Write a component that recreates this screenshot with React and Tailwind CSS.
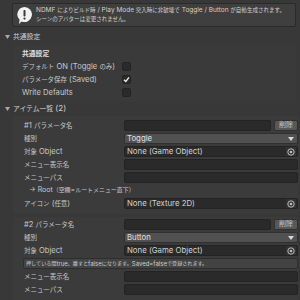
import React from 'react';

const font = { fontFamily: '"Inter", "Noto Sans CJK JP", sans-serif' };

function T({ children }) {
    const parts = String(children).split(/([\u3000-\u30ff\u4e00-\u9fff\uff00-\uffef]+)/);
    return (
        <>
            {parts.map((p, i) =>
                i % 2 === 1 ? <span key={i} className="text-[0.85em]">{p}</span> : <React.Fragment key={i}>{p}</React.Fragment>
            )}
        </>
    );
}

function Foldout({ title }) {
    return (
        <div className="flex items-center h-[13px] pl-[5px] text-[8px] text-[#d2d2d2] whitespace-nowrap">
            <svg width="5" height="4" viewBox="0 0 5 4" className="mr-[3px]">
                <path d="M0 0 L5 0 L2.5 4 Z" fill="#a8a8a8" />
            </svg>
            <span className="text-[8px]"><T>{title}</T></span>
        </div>
    );
}

function Row({ label, children }) {
    return (
        <div className="flex items-center h-[11px]">
            <div className="w-[100px] shrink-0 text-[7.6px] leading-[11px] text-[#c8c8c8] whitespace-nowrap"><T>{label}</T></div>
            <div className="flex-1 flex h-full gap-[3px]">{children}</div>
        </div>
    );
}

function TextField() {
    return <div className="flex-1 h-full bg-[#2a2a2a] border border-[#232323] rounded-[2px]" />;
}

function ObjectField({ text }) {
    return (
        <div className="flex-1 h-full bg-[#2a2a2a] border border-[#232323] rounded-[2px] flex items-center pl-[2px] text-[7.8px] text-[#d2d2d2] whitespace-nowrap">
            <span className="flex-1">{text}</span>
            <div className="w-[10px] h-full flex items-center justify-center bg-[#333333] mr-[1px]">
                <svg width="8" height="8" viewBox="0 0 8 8">
                    <circle cx="4" cy="4" r="3.2" fill="none" stroke="#bdbdbd" strokeWidth="1" />
                    <circle cx="4" cy="4" r="1.3" fill="#bdbdbd" />
                </svg>
            </div>
        </div>
    );
}

function Dropdown({ text }) {
    return (
        <div className="flex-1 h-full bg-[#515151] border border-[#303030] rounded-[2px] flex items-center pl-[2px] text-[7.8px] text-[#e0e0e0]">
            <span className="flex-1">{text}</span>
            <svg width="6" height="4" viewBox="0 0 6 4" className="mr-[3px]">
                <path d="M0 0 L6 0 L3 4 Z" fill="#d8d8d8" />
            </svg>
        </div>
    );
}

function DeleteButton() {
    return (
        <div className="w-[24px] h-full bg-[#585858] border border-[#303030] rounded-[2px] flex items-center justify-center text-[7px] text-[#c8c8c8]">削除</div>
    );
}

function CheckRow({ label, checked }) {
    return (
        <div className="flex items-center h-[13px]">
            <div className="w-[100px] shrink-0 text-[7.6px] text-[#c8c8c8] whitespace-nowrap"><T>{label}</T></div>
            <div className="w-[9px] h-[9px] bg-[#2a2a2a] border border-[#232323] rounded-[2px] flex items-center justify-center">
                {checked && (
                    <svg width="7" height="7" viewBox="0 0 7 7">
                        <path d="M1 3.8 L2.8 5.5 L6 1.3" fill="none" stroke="#f0f0f0" strokeWidth="1.3" />
                    </svg>
                )}
            </div>
        </div>
    );
}

export default function App() {
    return (
        <div className="w-[300px] h-[300px] overflow-hidden bg-[#383838] flex flex-col" style={font}>
            {/* help box */}
            <div className="mt-[3px] ml-[12px] mr-[4px] h-[24px] shrink-0 bg-[#3f3f3f] border border-[#2a2a2a] rounded-[2px] flex items-center">
                <svg width="17" height="19" viewBox="0 0 17 19" className="ml-[3px] mr-[3px] shrink-0">
                    <path d="M8.5 1 A7.5 7.5 0 1 1 5.5 15.4 L3 18 L3.6 13.8 A7.5 7.5 0 0 1 8.5 1 Z" fill="#f2f2f2" />
                    <rect x="7.5" y="4" width="2" height="6.5" rx="0.8" fill="#3a3a3a" />
                    <circle cx="8.5" cy="12.6" r="1.1" fill="#3a3a3a" />
                </svg>
                <div className="text-[6.5px] leading-[9px] text-[#d0d0d0] whitespace-nowrap">
                    <div><T>NDMF によりビルド時 / Play Mode 突入時に非破壊で Toggle / Button が自動生成されます。</T></div>
                    <div><T>シーンのアバターは変更されません。</T></div>
                </div>
            </div>

            <div className="h-[3px] shrink-0" />
            <Foldout title="共通設定" />

            {/* common settings box */}
            <div className="ml-[13px] mr-[4px] mt-[2px] pt-[3px] pb-[2px] pl-[9px] bg-[#3a3a3a] shrink-0">
                <div className="h-[12px] flex items-center text-[8px] font-bold text-[#e0e0e0]"><T>共通設定</T></div>
                <CheckRow label="デフォルト ON (Toggle のみ)" />
                <CheckRow label="パラメータ保存 (Saved)" checked />
                <CheckRow label="Write Defaults" />
            </div>

            <div className="h-[1px] shrink-0" />
            <Foldout title="アイテム一覧 (2)" />

            {/* item 1 */}
            <div className="ml-[13px] mr-[2px] mt-[1px] pt-[4px] pb-[5px] pl-[11px] bg-[#3b3b3b] flex flex-col gap-[2px] shrink-0">
                <Row label="#1  パラメータ名">
                    <TextField />
                    <DeleteButton />
                </Row>
                <Row label="種別"><Dropdown text="Toggle" /></Row>
                <Row label="対象 Object"><ObjectField text="None (Game Object)" /></Row>
                <Row label="メニュー表示名"><TextField /></Row>
                <Row label="メニューパス"><TextField /></Row>
                <div className="h-[11px] flex items-center pl-[5px] text-[7px] text-[#c8c8c8] whitespace-nowrap"><T>→ Root（空欄 = ルートメニュー直下）</T></div>
                <Row label="アイコン (任意)"><ObjectField text="None (Texture 2D)" /></Row>
            </div>

            {/* item 2 */}
            <div className="ml-[13px] mr-[2px] mt-[3px] pt-[2px] pl-[11px] bg-[#3b3b3b] flex flex-col gap-[2px] flex-1">
                <Row label="#2  パラメータ名">
                    <TextField />
                    <DeleteButton />
                </Row>
                <Row label="種別"><Dropdown text="Button" /></Row>
                <Row label="対象 Object"><ObjectField text="None (Game Object)" /></Row>
                <div className="h-[11px] -ml-[1px] bg-[#434343] border border-[#2e2e2e] rounded-[2px] flex items-center pl-[2px] text-[6px] text-[#cfcfcf] whitespace-nowrap"><T>押している間 true、離すと false になります。Saved=false で登録されます。</T></div>
                <Row label="メニュー表示名"><TextField /></Row>
                <Row label="メニューパス"><TextField /></Row>
            </div>
        </div>
    );
}
